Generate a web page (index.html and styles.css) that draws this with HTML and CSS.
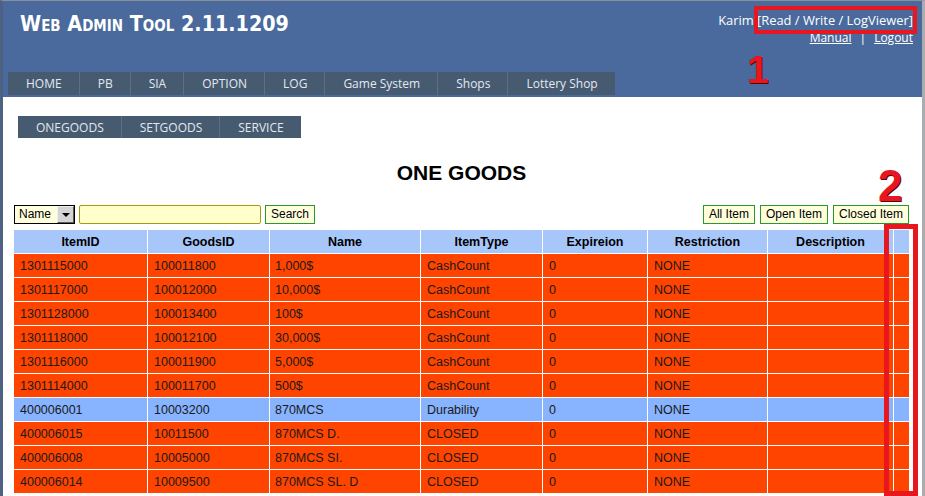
FILE: index.html
```html
<!DOCTYPE html>
<html>
<head>
<meta charset="utf-8">
<title>Web Admin Tool</title>
<link rel="stylesheet" href="styles.css">
</head>
<body>
<div class="page">
  <header class="top">
    <div class="top-row">
      <h1 class="brand">Web Admin Tool 2.11.1209</h1>
      <div class="user">
        <div class="user-line">Karim [Read / Write / LogViewer]</div>
        <div class="links"><a href="#">Manual</a><span class="sep">|</span><a href="#">Logout</a></div>
      </div>
    </div>
    <nav class="menu">
      <a class="menu-item" href="#">HOME</a>
      <a class="menu-item" href="#">PB</a>
      <a class="menu-item" href="#">SIA</a>
      <a class="menu-item" href="#">OPTION</a>
      <a class="menu-item" href="#">LOG</a>
      <a class="menu-item" href="#">Game System</a>
      <a class="menu-item" href="#">Shops</a>
      <a class="menu-item" href="#">Lottery Shop</a>
    </nav>
  </header>

  <main class="content">
    <nav class="menu submenu">
      <a class="menu-item" href="#">ONEGOODS</a>
      <a class="menu-item" href="#">SETGOODS</a>
      <a class="menu-item" href="#">SERVICE</a>
    </nav>

    <h2 class="title">ONE GOODS</h2>

    <div class="toolbar">
      <div class="search">
        <div class="select"><span class="select-text">Name</span><span class="select-btn"><span class="arrow"></span></span></div>
        <input class="field" type="text">
        <button class="btn">Search</button>
      </div>
      <div class="filters">
        <button class="btn">All Item</button>
        <button class="btn">Open Item</button>
        <button class="btn">Closed Item</button>
      </div>
    </div>

    <table class="grid">
      <thead>
        <tr>
          <th class="c1">ItemID</th>
          <th class="c2">GoodsID</th>
          <th class="c3">Name</th>
          <th class="c4">ItemType</th>
          <th class="c5">Expireion</th>
          <th class="c6">Restriction</th>
          <th class="c7">Description</th>
          <th class="c8"></th>
        </tr>
      </thead>
      <tbody>
        <tr class="closed"><td>1301115000</td><td>100011800</td><td>1,000$</td><td>CashCount</td><td>0</td><td>NONE</td><td></td><td></td></tr>
        <tr class="closed"><td>1301117000</td><td>100012000</td><td>10,000$</td><td>CashCount</td><td>0</td><td>NONE</td><td></td><td></td></tr>
        <tr class="closed"><td>1301128000</td><td>100013400</td><td>100$</td><td>CashCount</td><td>0</td><td>NONE</td><td></td><td></td></tr>
        <tr class="closed"><td>1301118000</td><td>100012100</td><td>30,000$</td><td>CashCount</td><td>0</td><td>NONE</td><td></td><td></td></tr>
        <tr class="closed"><td>1301116000</td><td>100011900</td><td>5,000$</td><td>CashCount</td><td>0</td><td>NONE</td><td></td><td></td></tr>
        <tr class="closed"><td>1301114000</td><td>100011700</td><td>500$</td><td>CashCount</td><td>0</td><td>NONE</td><td></td><td></td></tr>
        <tr class="open"><td>400006001</td><td>10003200</td><td>870MCS</td><td>Durability</td><td>0</td><td>NONE</td><td></td><td></td></tr>
        <tr class="closed"><td>400006015</td><td>10011500</td><td>870MCS D.</td><td>CLOSED</td><td>0</td><td>NONE</td><td></td><td></td></tr>
        <tr class="closed"><td>400006008</td><td>10005000</td><td>870MCS SI.</td><td>CLOSED</td><td>0</td><td>NONE</td><td></td><td></td></tr>
        <tr class="closed"><td>400006014</td><td>10009500</td><td>870MCS SL. D</td><td>CLOSED</td><td>0</td><td>NONE</td><td></td><td></td></tr>
      </tbody>
    </table>
  </main>

  <div class="mark-box mark-box-1"></div>
  <div class="mark-num mark-num-1">1</div>
  <div class="mark-num mark-num-2">2</div>
  <div class="mark-box mark-box-2"></div>
</div>
</body>
</html>
```

FILE: styles.css
```css
html, body {
  margin: 0;
  padding: 0;
  overflow: hidden;
  background: #ffffff;
}

.page {
  position: relative;
  box-sizing: border-box;
  width: 925px;
  height: 496px;
  border-top: 1px solid #8a8f98;
  border-left: 3px solid #4d6283;
  border-right: 3px solid #a9acb0;
  overflow: hidden;
  font-family: "Liberation Sans", Arial, sans-serif;
}

/* ---------- header ---------- */
.top {
  height: 96px;
  box-sizing: border-box;
  background: #4a6a9d;
  display: flex;
  flex-direction: column;
  padding: 0 9px 2px 5px;
}

.top-row {
  display: flex;
  justify-content: space-between;
  align-items: flex-start;
}

.brand {
  margin: 10px 0 0 12px;
  font-family: "DejaVu Sans Condensed", "DejaVu Sans", sans-serif;
  font-weight: bold;
  font-size: 21.3px;
  line-height: 26px;
  font-variant: small-caps;
  color: #ffffff;
}

.user {
  margin-top: 10px;
  text-align: right;
  font-family: "Open Sans", sans-serif;
  font-size: 12.9px;
  line-height: 18px;
  color: #ffffff;
}

.links {
  font-size: 12px;
}

.links a {
  color: #ffffff;
  text-decoration: underline;
}

.links .sep {
  margin: 0 8px;
}

/* ---------- menus ---------- */
.menu {
  margin-top: auto;
  display: flex;
  align-self: flex-start;
  height: 23px;
  background: #465a70;
}

.menu-item {
  display: flex;
  align-items: center;
  padding: 0 17px 0 18px;
  font-family: "Open Sans", sans-serif;
  font-size: 12px;
  color: #e2e9f2;
  text-decoration: none;
  border-right: 1px solid #5a6f89;
}

.menu-item:last-child {
  border-right: 0;
}

/* ---------- content ---------- */
.content {
  padding: 19px 0 0 11px;
}

.submenu {
  width: fit-content;
  height: 22px;
  margin-left: 4px;
}

.title {
  margin: 23px 0 0;
  width: 895px;
  text-align: center;
  font-size: 21px;
  line-height: 24px;
  font-weight: bold;
  color: #000000;
}

.toolbar {
  margin-top: 19px;
  width: 895px;
  display: flex;
  justify-content: space-between;
  align-items: center;
  height: 20px;
}

.search, .filters {
  display: flex;
  align-items: center;
  gap: 4px;
}

.filters {
  gap: 5px;
}

.select {
  box-sizing: border-box;
  width: 61px;
  height: 19px;
  border: 1px solid #000000;
  background: #ffffdd;
  display: flex;
  align-items: center;
  justify-content: space-between;
  font-size: 12px;
  padding-left: 4px;
}

.select-btn {
  box-sizing: border-box;
  width: 17px;
  height: 17px;
  background: #d4d4d4;
  border: 1px solid #5a5a5a;
  border-top-color: #f0f0f0;
  border-left-color: #f0f0f0;
  display: flex;
  align-items: center;
  justify-content: center;
}

.arrow {
  width: 0;
  height: 0;
  border-left: 4px solid transparent;
  border-right: 4px solid transparent;
  border-top: 4px solid #000000;
  margin-top: 1px;
}

.field {
  box-sizing: border-box;
  width: 182px;
  height: 19px;
  margin: 0;
  border: 1px solid #a89a10;
  border-radius: 2px;
  background: #ffffcc;
  outline: none;
}

.btn {
  box-sizing: border-box;
  height: 19px;
  margin: 0;
  padding: 0 5px;
  border: 1px solid #2a982a;
  background: #ffffdc;
  font-family: "Liberation Sans", Arial, sans-serif;
  font-size: 12px;
  color: #000000;
}

/* ---------- grid ---------- */
.grid {
  margin-top: 6px;
  width: 895px;
  table-layout: fixed;
  border-collapse: separate;
  border-spacing: 0;
  font-size: 12.5px;
}

.grid th, .grid td {
  box-sizing: border-box;
  height: 24px;
  border-right: 1px solid #ffffff;
  border-bottom: 1px solid #ffffff;
  padding: 0 0 0 6px;
  white-space: nowrap;
  overflow: hidden;
}

.grid th:last-child, .grid td:last-child {
  border-right: 0;
}

.grid th {
  background: #a7c7fa;
  font-weight: bold;
  text-align: center;
  padding: 0;
  color: #000000;
}

.grid td {
  text-align: left;
  color: #1a1a1a;
}

.grid td:nth-child(3) {
  padding-left: 5px;
}

.c1 { width: 134px; }
.c2 { width: 122px; }
.c3 { width: 151px; }
.c4 { width: 122px; }
.c5 { width: 105px; }
.c6 { width: 120px; }
.c7 { width: 126px; }
.c8 { width: 15px; }

.closed td { background: #ff4400; }
.open td { background: #87b3ff; }

/* ---------- annotations (overlay) ---------- */
.mark-box {
  position: absolute;
  box-sizing: border-box;
  border-style: solid;
  border-color: #e8161e;
}

.mark-box-1 {
  left: 751px;
  top: 5px;
  width: 163px;
  height: 28px;
  border-width: 4px;
}

.mark-box-2 {
  left: 881px;
  top: 223px;
  width: 34px;
  height: 272px;
  border-width: 5px;
}

.mark-num {
  position: absolute;
  font-family: "Liberation Sans", Arial, sans-serif;
  font-weight: bold;
  line-height: 1;
  color: #e8161e;
  text-shadow: 1px 1px 0 #5a0000;
}

.mark-num-1 {
  left: 744px;
  top: 49px;
  font-size: 39px;
}

.mark-num-2 {
  left: 875px;
  top: 163px;
  font-size: 44px;
}
```
